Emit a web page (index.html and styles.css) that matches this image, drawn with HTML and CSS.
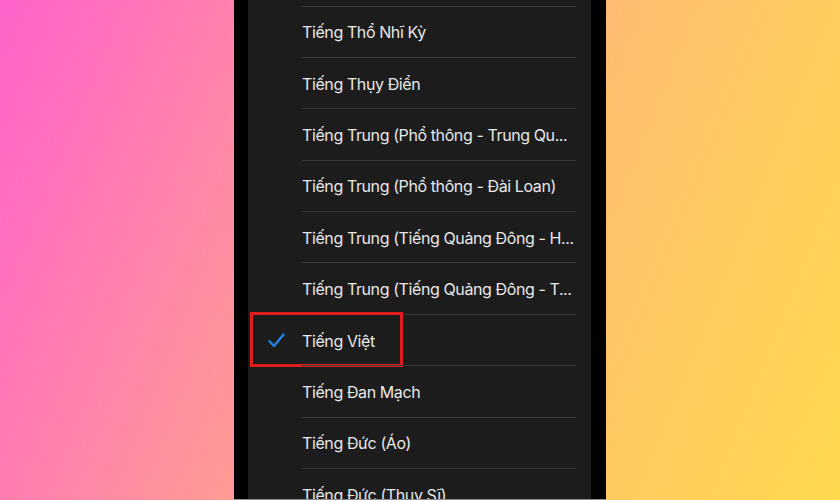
FILE: index.html
```html
<!DOCTYPE html>
<html lang="vi">
<head>
<meta charset="utf-8">
<title>Ngôn ngữ</title>
<link rel="stylesheet" href="styles.css">
</head>
<body>
<div class="stage">
  <div class="phone">
    <div class="screen">
      <ul class="list">
        <li class="row"><span class="label">Tiếng Thổ Nhĩ Kỳ</span></li>
        <li class="row"><span class="label">Tiếng Thụy Điển</span></li>
        <li class="row"><span class="label">Tiếng Trung (Phổ thông - Trung Qu...</span></li>
        <li class="row"><span class="label">Tiếng Trung (Phổ thông - Đài Loan)</span></li>
        <li class="row"><span class="label">Tiếng Trung (Tiếng Quảng Đông - H...</span></li>
        <li class="row"><span class="label">Tiếng Trung (Tiếng Quảng Đông - T...</span></li>
        <li class="row selected">
          <svg class="check" width="17" height="15" viewBox="0 0 17 15"><path d="M1.5 8.2 L6 13 L15.5 1.5" fill="none" stroke="#1c86e8" stroke-width="2.3" stroke-linecap="round" stroke-linejoin="round"/></svg>
          <span class="label">Tiếng Việt</span>
          <span class="highlight"></span>
        </li>
        <li class="row"><span class="label">Tiếng Đan Mạch</span></li>
        <li class="row"><span class="label">Tiếng Đức (Áo)</span></li>
        <li class="row"><span class="label">Tiếng Đức (Thụy Sĩ)</span></li>
      </ul>
    </div>
  </div>
</div>
</body>
</html>
```
FILE: styles.css
```css
html, body {
  margin: 0;
  padding: 0;
}
body {
  width: 840px;
  height: 500px;
  overflow: hidden;
  font-family: Inter, "Noto Sans", "DejaVu Sans", sans-serif;
}
.stage {
  width: 840px;
  height: 500px;
  background: linear-gradient(112deg, #ff62ca 0%, #ff9c93 42%, #ffbf6e 62%, #ffd94e 100%);
  display: flex;
  justify-content: center;
}
.phone {
  width: 372px;
  height: 500px;
  background: #000;
  padding: 0 15px 0 14px;
  box-sizing: border-box;
  border-bottom: 1px solid #8c8c8c;
}
.screen {
  height: 100%;
  background: #1c1c1c;
  overflow: hidden;
}
.list {
  list-style: none;
  margin: 0;
  padding: 5.5px 0 0 0;
}
.row {
  position: relative;
  height: 51.4px;
  box-sizing: border-box;
  display: flex;
  align-items: center;
  padding-left: 54px;
}
.row::before {
  content: "";
  position: absolute;
  top: 0;
  left: 54px;
  right: 15px;
  height: 1px;
  background: #38383a;
}
.label {
  color: #e8e8e8;
  font-size: 16px;
  letter-spacing: -0.4px;
  white-space: nowrap;
  padding-top: 2px;
}
.check {
  position: absolute;
  left: 20px;
  top: 19px;
}
.highlight {
  position: absolute;
  left: 2px;
  top: -2px;
  width: 153px;
  height: 55px;
  box-sizing: border-box;
  border: 3px solid #e01e1e;
}
```
